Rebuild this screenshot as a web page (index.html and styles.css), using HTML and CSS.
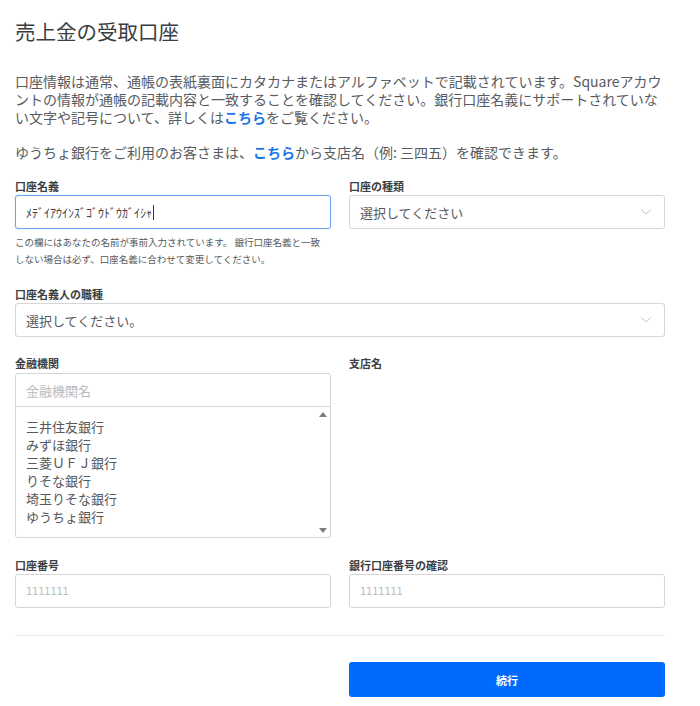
FILE: index.html
```html
<!DOCTYPE html>
<html lang="ja">
<head>
<meta charset="utf-8">
<title>売上金の受取口座</title>
<link rel="stylesheet" href="styles.css">
</head>
<body>
<div class="page">
  <h1 class="title">売上金の受取口座</h1>
  <p class="intro">口座情報は通常、通帳の表紙裏面にカタカナまたはアルファベットで記載されています。Squareアカウントの情報が通帳の記載内容と一致することを確認してください。銀行口座名義にサポートされていない文字や記号について、詳しくは<a class="link" href="#">こちら</a>をご覧ください。</p>
  <p class="intro intro2">ゆうちょ銀行をご利用のお客さまは、<a class="link" href="#">こちら</a>から支店名（例: 三四五）を確認できます。</p>

  <div class="row row1">
    <div class="field">
      <div class="label">口座名義</div>
      <div class="input focused"><span class="value">ﾒﾃﾞｲｱｳｲﾝｽﾞｺﾞｳﾄﾞｳｶﾞｲｼｬ</span><span class="caret"></span></div>
      <div class="help">この欄にはあなたの名前が事前入力されています。 銀行口座名義と一致しない場合は必ず、口座名義に合わせて変更してください。</div>
    </div>
    <div class="field">
      <div class="label">口座の種類</div>
      <div class="input select"><span class="value">選択してください</span>
        <svg class="chev" width="12" height="8" viewBox="0 0 12 8"><path d="M1 1.5 L6 6 L11 1.5" fill="none" stroke="#c4c4c4" stroke-width="1"/></svg>
      </div>
    </div>
  </div>

  <div class="row-full">
    <div class="label">口座名義人の職種</div>
    <div class="input select"><span class="value">選択してください。</span>
      <svg class="chev" width="12" height="8" viewBox="0 0 12 8"><path d="M1 1.5 L6 6 L11 1.5" fill="none" stroke="#c4c4c4" stroke-width="1"/></svg>
    </div>
  </div>

  <div class="row row3">
    <div class="field">
      <div class="label">金融機関</div>
      <div class="combo">
        <div class="input combo-input"><span class="placeholder">金融機関名</span></div>
        <div class="listbox">
          <ul class="options">
            <li>三井住友銀行</li>
            <li>みずほ銀行</li>
            <li>三菱ＵＦＪ銀行</li>
            <li>りそな銀行</li>
            <li>埼玉りそな銀行</li>
            <li>ゆうちょ銀行</li>
          </ul>
          <div class="scrollbar">
            <span class="arrow up"></span>
            <span class="arrow down"></span>
          </div>
        </div>
      </div>
    </div>
    <div class="field">
      <div class="label">支店名</div>
    </div>
  </div>

  <div class="row row4">
    <div class="field">
      <div class="label">口座番号</div>
      <div class="input"><span class="placeholder num">1111111</span></div>
    </div>
    <div class="field">
      <div class="label">銀行口座番号の確認</div>
      <div class="input"><span class="placeholder num">1111111</span></div>
    </div>
  </div>

  <hr class="divider">

  <div class="row actions">
    <div></div>
    <button class="btn" type="button">続行</button>
  </div>
</div>
</body>
</html>
```

FILE: styles.css
```css
* { box-sizing: border-box; }
body {
  margin: 0;
  background: #ffffff;
  font-family: "Noto Sans CJK JP", "Noto Sans", sans-serif;
  color: #3c3f44;
}
.page {
  width: 650px;
  margin-left: 15px;
  padding-top: 19px;
}
.title {
  margin: 0;
  font-size: 20.5px;
  line-height: 24px;
  font-weight: 400;
  color: #3a3d42;
}
.intro {
  margin: 29px 0 0;
  font-size: 14px;
  line-height: 18px;
  color: #585b60;
}
.intro2 { margin-top: 17px; }
.link {
  color: #1a73e8;
  font-weight: 700;
  text-decoration: none;
}
.row {
  display: grid;
  grid-template-columns: 316px 316px;
  column-gap: 18px;
}
.row1 { margin-top: 18px; }
.row-full { margin-top: 19px; }
.row3 { margin-top: 19px; }
.row3 .label { margin-bottom: 3px; }
.row4 { margin-top: 20px; }
.label {
  font-size: 11px;
  line-height: 14px;
  font-weight: 700;
  color: #3c3f44;
  margin-bottom: 2px;
}
.input {
  position: relative;
  display: flex;
  align-items: center;
  height: 34px;
  padding: 0 10px;
  border: 1px solid #d6d6d6;
  border-radius: 3px;
  background: #fff;
  font-size: 13px;
  color: #55585d;
}
.input.focused {
  border-color: #6aa6ee;
  box-shadow: 0 0 2px rgba(70, 140, 230, 0.35);
}
.input.focused .value {
  font-size: 12px;
  color: #3c3f44;
}
.caret {
  display: inline-block;
  width: 1px;
  height: 15px;
  background: #333;
  margin-left: 1px;
}
.select { justify-content: space-between; }
.select .value { color: #55585d; }
.chev { margin-right: 2px; }
.placeholder { color: #b9bbbe; }
.placeholder.num {
  font-family: "Liberation Sans Narrow", "DejaVu Sans Condensed", sans-serif;
  font-size: 11px;
  letter-spacing: -0.2px;
}
.help {
  margin-top: 5px;
  max-width: 311px;
  font-size: 9.5px;
  line-height: 17px;
  color: #55585d;
}
.combo-input {
  border-radius: 3px 3px 0 0;
}
.listbox {
  display: flex;
  height: 131px;
  border: 1px solid #d6d6d6;
  border-top: none;
  border-radius: 0 0 3px 3px;
}
.options {
  flex: 1;
  list-style: none;
  margin: 0;
  padding: 11px 0 0 10px;
  font-size: 13px;
  line-height: 18px;
  color: #55585d;
}
.scrollbar {
  width: 14px;
  display: flex;
  flex-direction: column;
  justify-content: space-between;
  align-items: center;
  padding: 5px 0 4px;
}
.arrow {
  width: 0;
  height: 0;
  border-left: 4px solid transparent;
  border-right: 4px solid transparent;
}
.arrow.up { border-bottom: 5px solid #7d7d7d; }
.arrow.down { border-top: 5px solid #7d7d7d; }
.divider {
  margin: 27px 0 0;
  border: none;
  border-top: 1px solid #e6e6e6;
}
.actions { margin-top: 26px; }
.btn {
  height: 35px;
  border: none;
  border-radius: 3px;
  background: #006aff;
  color: #fff;
  font-family: "Noto Sans CJK JP", sans-serif;
  font-size: 11px;
  font-weight: 700;
}
```
